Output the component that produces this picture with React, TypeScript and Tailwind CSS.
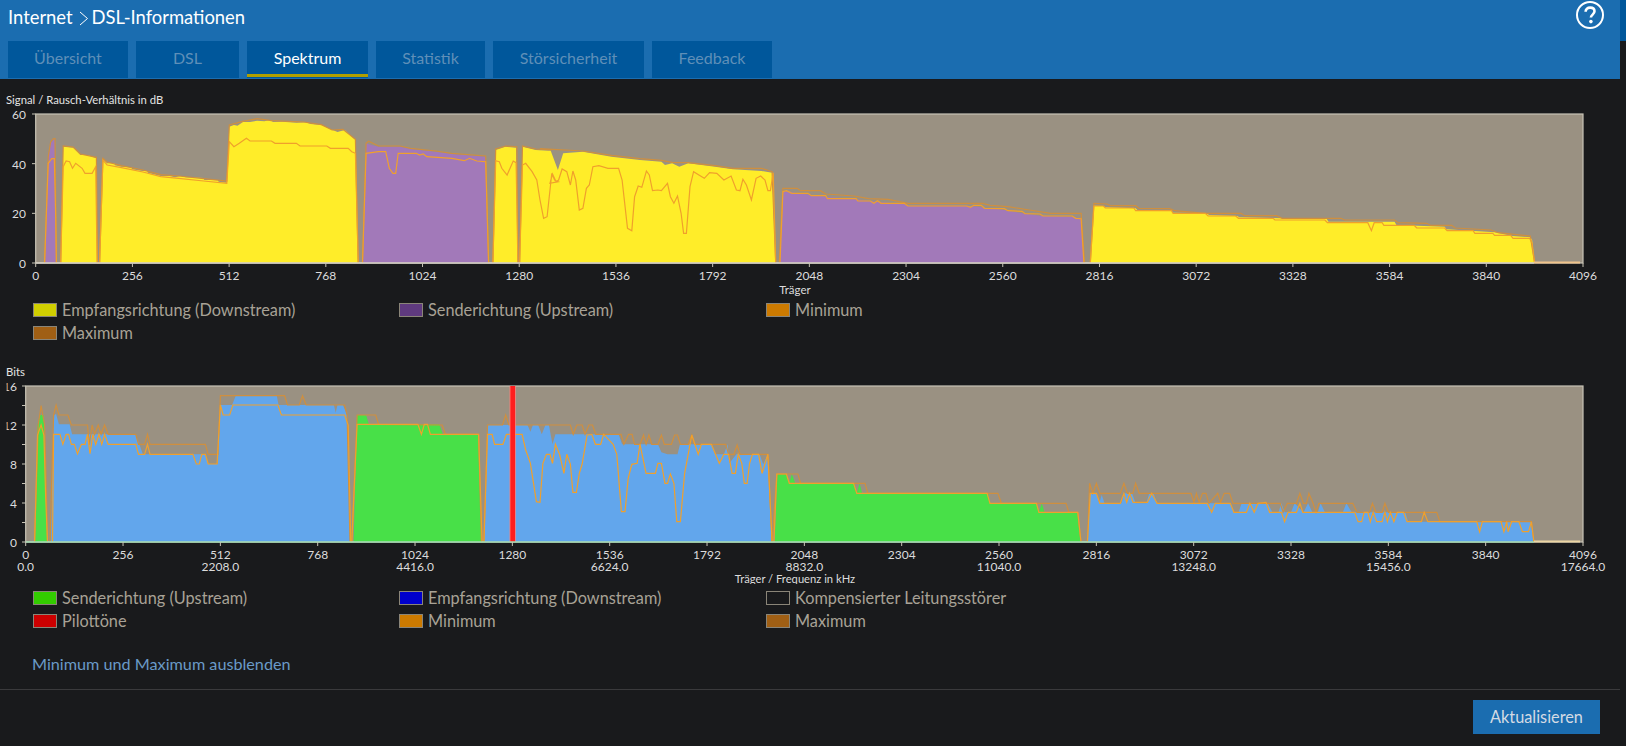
import React from 'react';

type Trace = [number, number, number[]][];

// Curves are read off the reference crops: page x = ox + x / 2.8, page y = oy + y / 3
const toPoints = (trace: Trace) =>
  trace
    .flatMap(([ox, oy, pts]) => {
      const out: string[] = [];
      for (let i = 0; i < pts.length; i += 2) {
        out.push(`${(ox + pts[i] / 2.8).toFixed(1)},${(oy + pts[i + 1] / 3).toFixed(1)}`);
      }
      return out;
    })
    .join(' ');

const YELLOW = '#ffed29';
const PURPLE = '#a279b9';
const BLUE = '#62a6ec';
const GREEN = '#48e048';

const snrAreas: { fill: string; trace: Trace }[] = [
  { fill: PURPLE, trace: [[0, 100, [125, 488, 135, 170, 142, 130, 150, 118, 154, 118, 155, 300, 158, 488]]] },
  {
    fill: YELLOW,
    trace: [[0, 100, [170, 488, 177, 140, 205, 143, 225, 165, 245, 165, 270, 175, 272, 488, 279, 488, 288, 178, 300, 190, 320, 190, 322, 196, 340, 200, 368, 202, 370, 208, 400, 213, 412, 213, 414, 218, 450, 228, 475, 228, 490, 232, 505, 228, 520, 232, 570, 234, 572, 240, 610, 240, 612, 245, 635, 248, 642, 80, 655, 75, 665, 77, 680, 66, 700, 66, 720, 62, 740, 64, 755, 60, 765, 66, 790, 65, 830, 68, 855, 67, 870, 72, 900, 75, 920, 85, 945, 96, 965, 90, 995, 120, 1003, 488]]],
  },
  { fill: PURPLE, trace: [[0, 100, [1015, 488, 1025, 130, 1040, 135, 1060, 140, 1120, 140, 1150, 147, 1220, 155, 1265, 162, 1360, 170, 1368, 488]]] },
  { fill: YELLOW, trace: [[0, 100, [1380, 488, 1388, 150, 1415, 140, 1445, 143, 1450, 488]]] },
  {
    fill: YELLOW,
    trace: [
      [0, 100, [1455, 488, 1463, 140, 1500, 150, 1545, 153]],
      [540, 100, [0, 150, 30, 152, 50, 210, 65, 160, 120, 155, 200, 170, 280, 180, 340, 185, 350, 195, 370, 190, 390, 200, 415, 190, 490, 200, 540, 208, 620, 213, 650, 218, 660, 488]],
    ],
  },
  { fill: PURPLE, trace: [[540, 100, [670, 488, 680, 275, 690, 272, 720, 280, 760, 285, 800, 290, 880, 297, 920, 303, 1020, 312, 1030, 317, 1200, 317, 1300, 330, 1350, 340, 1400, 347, 1490, 350, 1515, 355, 1523, 488]]] },
  { fill: YELLOW, trace: [[1066, 0, [68, 788, 78, 617, 105, 618, 110, 622, 195, 625, 200, 630, 295, 632, 300, 638, 395, 640, 400, 645, 480, 648, 485, 652, 600, 655, 730, 657, 735, 665, 920, 665, 925, 675, 1060, 680, 1065, 688, 1200, 697, 1250, 708, 1300, 712, 1305, 720, 1312, 788]]] },
];

const snrMax: Trace[] = [
  [[0, 100, [125, 488, 135, 170, 142, 125, 150, 116, 154, 116, 158, 488]]],
  [[0, 100, [170, 488, 177, 138, 205, 141, 225, 162, 270, 172, 273, 488, 279, 488, 288, 175, 300, 186, 340, 197, 400, 210, 450, 224, 500, 228, 570, 236, 635, 243, 642, 75, 680, 64, 720, 56, 760, 62, 850, 66, 900, 74, 930, 90, 960, 88, 995, 118, 1003, 488]]],
  [[0, 100, [1015, 488, 1025, 130, 1032, 124, 1060, 138, 1120, 138, 1150, 145, 1220, 153, 1265, 160, 1360, 168, 1368, 488]]],
  [[0, 100, [1380, 488, 1388, 147, 1415, 138, 1447, 140, 1450, 488]]],
  [
    [0, 100, [1455, 488, 1463, 138, 1500, 147, 1545, 150]],
    [540, 100, [0, 146, 120, 153, 200, 166, 280, 176, 340, 181, 370, 187, 415, 188, 490, 197, 540, 205, 620, 205, 650, 215, 660, 488]],
  ],
  [[540, 100, [670, 488, 680, 265, 720, 265, 730, 272, 785, 272, 800, 282, 880, 288, 920, 296, 975, 298, 1030, 310, 1240, 310, 1260, 316, 1310, 320, 1370, 330, 1430, 340, 1515, 340, 1525, 488]]],
  [[1066, 0, [68, 788, 78, 610, 115, 612, 125, 617, 195, 617, 205, 625, 290, 626, 305, 632, 390, 640, 490, 640, 500, 647, 590, 647, 605, 655, 770, 655, 780, 660, 920, 660, 930, 668, 1010, 670, 1020, 676, 1080, 676, 1090, 684, 1190, 690, 1210, 698, 1300, 708, 1312, 788]]],
];

const snrMin: Trace[] = [
  [[0, 100, [125, 488, 135, 190, 145, 176, 152, 176, 156, 350, 158, 488]]],
  [[0, 100, [170, 488, 177, 200, 185, 183, 195, 185, 203, 205, 212, 190, 230, 205, 238, 220, 258, 220, 268, 200, 272, 488, 279, 488, 288, 180, 300, 195, 340, 203, 400, 216, 450, 230, 500, 235, 570, 243, 635, 250, 642, 125, 655, 140, 670, 130, 690, 115, 700, 123, 760, 123, 770, 130, 830, 130, 840, 138, 915, 138, 925, 145, 975, 145, 985, 155, 995, 160, 1003, 488]]],
  [[0, 100, [1015, 488, 1025, 160, 1060, 155, 1080, 155, 1090, 205, 1100, 220, 1108, 220, 1115, 160, 1165, 160, 1175, 165, 1185, 162, 1195, 170, 1265, 175, 1300, 182, 1315, 175, 1335, 183, 1360, 185, 1368, 488]]],
  [[0, 100, [1380, 488, 1388, 182, 1398, 185, 1405, 205, 1420, 225, 1437, 183, 1445, 188, 1450, 488]]],
  [
    [0, 100, [1455, 488, 1463, 195, 1472, 190, 1490, 215, 1503, 240, 1512, 300, 1522, 355, 1532, 350, 1545, 220, 1553, 240, 1563, 245]],
    [540, 100, [28, 250, 35, 222, 45, 245, 52, 240, 62, 207, 75, 215, 85, 255, 92, 213, 100, 240, 110, 330, 120, 325, 130, 265, 138, 255, 148, 200, 165, 197, 190, 205, 220, 205, 230, 240, 245, 385, 257, 392, 265, 290, 275, 258, 285, 262, 298, 213, 306, 225, 315, 272, 330, 270, 340, 272, 357, 250, 365, 290, 375, 310, 385, 288, 395, 340, 402, 400, 410, 400, 420, 260, 430, 215, 445, 225, 460, 235, 475, 218, 495, 220, 515, 240, 535, 228, 550, 270, 560, 272, 568, 238, 578, 255, 592, 300, 605, 235, 618, 228, 630, 240, 638, 272, 645, 272, 653, 218, 660, 488]],
  ],
  [[540, 100, [672, 488, 680, 275, 690, 272, 705, 280, 750, 280, 760, 287, 800, 287, 805, 296, 885, 296, 890, 303, 925, 303, 935, 310, 945, 302, 955, 310, 1020, 310, 1030, 318, 1195, 318, 1205, 322, 1215, 316, 1235, 316, 1245, 325, 1300, 326, 1310, 332, 1350, 334, 1358, 341, 1400, 342, 1408, 348, 1490, 348, 1500, 355, 1515, 356, 1523, 488]]],
  [[1066, 0, [68, 788, 78, 618, 105, 618, 110, 624, 190, 624, 195, 632, 295, 632, 300, 640, 390, 640, 398, 648, 475, 648, 483, 655, 580, 655, 585, 660, 725, 660, 732, 668, 845, 668, 855, 692, 863, 668, 885, 668, 890, 676, 975, 676, 982, 684, 1060, 684, 1067, 692, 1140, 692, 1145, 700, 1195, 700, 1200, 706, 1245, 706, 1252, 715, 1298, 715, 1305, 730, 1312, 788]]],
];

const bitAreas: { fill: string; trace: Trace }[] = [
  { fill: GREEN, trace: [[0, 365, [97, 530, 105, 180, 113, 150, 122, 150, 128, 300, 133, 530]]] },
  {
    fill: BLUE,
    trace: [[0, 365, [137, 530, 143, 530, 148, 200, 152, 150, 157, 147, 165, 178, 195, 178, 202, 208, 380, 208, 390, 238, 400, 268, 575, 268, 583, 297, 610, 297, 617, 120, 650, 120, 660, 92, 775, 92, 780, 120, 935, 120, 940, 143, 945, 120, 960, 120, 972, 150, 975, 180, 982, 530]]],
  },
  { fill: GREEN, trace: [[0, 365, [990, 530, 1000, 150, 1025, 150, 1033, 178, 1230, 178, 1240, 208, 1340, 208, 1350, 530]]] },
  {
    fill: BLUE,
    trace: [
      [0, 365, [1355, 530, 1365, 180]],
      [490, 375, [0, 150, 105, 150, 113, 170, 120, 150, 135, 150, 145, 178, 155, 150, 165, 150, 175, 208, 183, 178, 360, 178, 370, 208, 470, 208, 480, 232, 497, 238, 525, 238, 532, 208, 620, 208, 630, 238, 655, 238, 665, 208, 670, 265, 690, 238, 755, 238, 765, 268, 778, 238, 788, 500]],
    ],
  },
  {
    fill: GREEN,
    trace: [
      [490, 375, [797, 500, 805, 297, 830, 297, 838, 325, 845, 297, 855, 325, 1020, 325, 1027, 355, 1035, 325, 1042, 355, 1395, 355, 1400, 385, 1530, 385, 1537, 412, 1545, 385, 1553, 412]],
      [1066, 375, [33, 412, 42, 500]],
    ],
  },
  {
    fill: BLUE,
    trace: [[1066, 375, [60, 500, 66, 355, 85, 355, 93, 385, 100, 360, 108, 385, 155, 385, 163, 355, 185, 355, 195, 385, 225, 385, 233, 355, 245, 355, 255, 385, 460, 385, 470, 412, 483, 412, 492, 385, 565, 385, 578, 412, 595, 412, 603, 385, 612, 412, 630, 412, 640, 385, 665, 412, 678, 385, 690, 412, 705, 412, 713, 385, 725, 412, 775, 412, 785, 385, 800, 412, 950, 412, 958, 440, 1303, 440, 1310, 500]]],
  },
];

const bitMax: Trace[] = [
  [[0, 365, [97, 530, 107, 180, 115, 122, 125, 180, 128, 300, 133, 530]]],
  [[0, 365, [140, 530, 150, 150, 157, 120, 165, 150, 190, 150, 200, 180, 245, 180, 250, 240, 258, 180, 265, 208, 275, 180, 283, 208, 293, 180, 303, 208, 380, 208, 388, 238, 405, 238, 413, 208, 420, 238, 575, 238, 583, 268, 610, 268, 617, 92, 797, 92, 805, 120, 838, 120, 847, 92, 857, 120, 965, 120, 972, 150, 980, 530]]],
  [[0, 365, [985, 530, 1000, 150, 1052, 150, 1060, 178, 1238, 180, 1247, 208, 1340, 208, 1348, 530]]],
  [
    [0, 365, [1355, 530, 1365, 180]],
    [490, 375, [0, 150, 35, 150, 44, 120, 53, 150, 225, 150, 233, 178, 243, 150, 258, 150, 266, 178, 277, 150, 287, 150, 296, 178, 367, 178, 375, 208, 388, 178, 398, 178, 405, 208, 420, 208, 430, 180, 437, 208, 445, 180, 453, 208, 470, 208, 480, 180, 488, 208, 508, 208, 517, 180, 525, 180, 533, 208, 555, 208, 565, 180, 573, 208, 660, 208, 668, 238, 683, 238, 692, 210, 700, 238, 778, 238, 790, 500]],
  ],
  [
    [490, 375, [790, 500, 803, 297, 862, 297, 870, 325, 1050, 325, 1058, 355, 1422, 355, 1432, 385, 1568, 385]],
    [1066, 375, [0, 385, 8, 412, 33, 412, 42, 500]],
  ],
  [[1066, 375, [60, 500, 66, 325, 75, 355, 85, 325, 95, 355, 152, 355, 162, 325, 172, 355, 187, 355, 195, 325, 205, 355, 350, 355, 358, 382, 365, 355, 373, 382, 382, 355, 392, 355, 400, 385, 425, 355, 433, 382, 443, 355, 458, 355, 468, 385, 600, 385, 608, 412, 620, 385, 645, 385, 655, 355, 665, 385, 673, 385, 680, 355, 692, 385, 700, 412, 708, 385, 803, 385, 815, 412, 850, 412, 858, 385, 868, 412, 885, 412, 893, 385, 903, 412, 1038, 412, 1047, 440, 1303, 440, 1310, 500]]],
];

const bitMin: Trace[] = [
  [[0, 365, [97, 530, 105, 210, 115, 180, 123, 210, 128, 400, 133, 530]]],
  [[0, 365, [147, 530, 150, 208, 168, 208, 176, 238, 185, 208, 192, 208, 200, 238, 208, 238, 217, 266, 228, 238, 238, 238, 245, 208, 252, 266, 260, 208, 268, 238, 277, 208, 285, 238, 293, 208, 303, 238, 380, 238, 388, 268, 405, 268, 413, 238, 420, 268, 540, 268, 550, 297, 558, 297, 565, 268, 575, 268, 583, 297, 608, 297, 617, 120, 625, 150, 643, 150, 652, 120, 778, 120, 788, 150, 965, 150, 975, 180, 982, 530]]],
  [[0, 365, [985, 530, 1000, 178, 1170, 178, 1180, 208, 1188, 178, 1197, 178, 1205, 208, 1340, 208, 1350, 530]]],
  [
    [0, 365, [1355, 530, 1365, 208, 1378, 208, 1385, 238, 1408, 238, 1418, 208]],
    [490, 375, [90, 178, 100, 225, 113, 265, 130, 380, 140, 382, 148, 265, 158, 238, 168, 238, 175, 265, 183, 208, 195, 238, 207, 295, 215, 238, 225, 268, 232, 352, 242, 352, 250, 295, 258, 268, 272, 180, 285, 178, 295, 208, 310, 208, 318, 178, 345, 208, 355, 238, 368, 410, 378, 410, 387, 310, 397, 268, 412, 265, 420, 208, 437, 295, 463, 295, 470, 265, 480, 265, 490, 325, 497, 325, 505, 297, 515, 325, 523, 440, 533, 440, 545, 295, 555, 238, 565, 180, 583, 238, 592, 208, 620, 208, 642, 265, 655, 238, 668, 238, 678, 295, 687, 295, 695, 238, 705, 265, 712, 325, 720, 325, 727, 265, 735, 238, 752, 238, 762, 295, 778, 238, 790, 500]],
  ],
  [
    [490, 375, [795, 500, 803, 297, 830, 297, 838, 325, 1018, 325, 1027, 355, 1392, 355, 1400, 385, 1530, 385, 1537, 412]],
    [1066, 375, [33, 412, 42, 500]],
  ],
  [[1066, 375, [60, 500, 68, 355, 85, 355, 95, 385, 152, 385, 162, 355, 170, 382, 178, 355, 188, 382, 228, 382, 240, 355, 255, 385, 395, 385, 408, 412, 418, 385, 460, 385, 470, 412, 505, 412, 515, 385, 527, 412, 538, 385, 560, 382, 570, 412, 603, 412, 612, 440, 622, 412, 645, 412, 655, 385, 663, 412, 808, 412, 818, 440, 828, 440, 835, 412, 845, 412, 852, 440, 860, 412, 870, 440, 885, 440, 893, 412, 900, 440, 908, 412, 918, 440, 928, 412, 945, 412, 955, 440, 995, 440, 1003, 412, 1013, 440, 1150, 440, 1158, 470, 1166, 440, 1218, 440, 1226, 470, 1234, 440, 1238, 470, 1248, 440, 1268, 440, 1278, 470, 1295, 470, 1303, 440, 1310, 500]]],
];

const carriers = [0, 256, 512, 768, 1024, 1280, 1536, 1792, 2048, 2304, 2560, 2816, 3072, 3328, 3584, 3840, 4096];

const Curves = ({ areas, max, min }: { areas: { fill: string; trace: Trace }[]; max: Trace[]; min: Trace[] }) => (
  <>
    {areas.map((a, i) => (
      <polygon key={i} points={toPoints(a.trace)} fill={a.fill} />
    ))}
    {max.map((t, i) => (
      <polyline key={i} points={toPoints(t)} fill="none" stroke="#cf8f3f" strokeWidth={1.2} />
    ))}
    {min.map((t, i) => (
      <polyline key={i} points={toPoints(t)} fill="none" stroke="#f0a02c" strokeWidth={1.2} />
    ))}
  </>
);

const SnrChart = () => {
  const left = 35.7;
  const right = 1583;
  const top = 114;
  const bottom = 263;
  const xOf = (c: number) => left + (c * (right - left)) / 4096;
  return (
    <svg viewBox="0 108 1620 188" className="block w-[1620px] h-[188px]">
      <rect x={left} y={top} width={right - left} height={bottom - top} fill="#9a9182" stroke="#c8c4b6" strokeWidth={1.2} />
      <Curves areas={snrAreas} max={snrMax} min={snrMin} />
      <line x1={1534} y1={bottom - 0.5} x2={1580} y2={bottom - 0.5} stroke="#f0c48c" strokeWidth={2} />
      <line x1={left} y1={bottom} x2={1534} y2={bottom} stroke="#d6d0c6" strokeWidth={1.5} />
      {[60, 40, 20, 0].map((v) => {
        const y = bottom - ((bottom - top) * v) / 60;
        return (
          <g key={v}>
            <line x1={32} y1={y} x2={left} y2={y} stroke="#c8c4b6" />
            <text x={26} y={y + 0.5} textAnchor="end" dominantBaseline="central" fontSize={12} fill="#dcdcdc">
              {v}
            </text>
          </g>
        );
      })}
      {carriers.map((c) => (
        <g key={c}>
          <line x1={xOf(c)} y1={bottom} x2={xOf(c)} y2={bottom + 4} stroke="#c8c4b6" />
          <text x={xOf(c)} y={275} textAnchor="middle" dominantBaseline="central" fontSize={12} fill="#dcdcdc">
            {c}
          </text>
        </g>
      ))}
      <text x={795} y={289} textAnchor="middle" dominantBaseline="central" fontSize={11.5} fill="#dcdcdc">
        Träger
      </text>
    </svg>
  );
};

const BitsChart = () => {
  const left = 25.7;
  const right = 1583;
  const top = 386;
  const bottom = 542;
  const xOf = (c: number) => left + (c * (right - left)) / 4096;
  const ticks = [16, 14, 12, 10, 8, 6, 4, 2, 0];
  return (
    <svg viewBox="0 380 1620 204" className="block w-[1620px] h-[204px]">
      <defs>
        <clipPath id="bits-labels">
          <rect x={6.6} y={380} width={20} height={170} />
        </clipPath>
      </defs>
      <rect x={left} y={top} width={right - left} height={bottom - top} fill="#9a9182" stroke="#c8c4b6" strokeWidth={1.2} />
      <Curves areas={bitAreas} max={bitMax} min={bitMin} />
      <rect x={509.6} y={top} width={6.1} height={bottom - top} fill="#ff8078" />
      <rect x={510.4} y={top} width={4.6} height={bottom - top} fill="#ff1e1e" />
      <line x1={1534} y1={bottom - 0.5} x2={1580} y2={bottom - 0.5} stroke="#ecd6a4" strokeWidth={2} />
      <line x1={left} y1={bottom} x2={1534} y2={bottom} stroke="#a4dcb4" strokeWidth={1.5} />
      {ticks.map((v) => {
        const y = bottom - ((bottom - top) * v) / 16;
        return (
          <g key={v}>
            <line x1={22} y1={y} x2={left} y2={y} stroke="#c8c4b6" />
            {v % 4 === 0 && (
              <g clipPath="url(#bits-labels)">
                <text x={17} y={y + 0.5} textAnchor="end" dominantBaseline="central" fontSize={12} fill="#dcdcdc">
                  {v}
                </text>
              </g>
            )}
          </g>
        );
      })}
      {carriers.map((c, i) => (
        <g key={c}>
          <line x1={xOf(c)} y1={bottom} x2={xOf(c)} y2={bottom + 4} stroke="#c8c4b6" />
          <text x={xOf(c)} y={554} textAnchor="middle" dominantBaseline="central" fontSize={12} fill="#dcdcdc">
            {c}
          </text>
          {i % 2 === 0 && (
            <text x={xOf(c)} y={566.5} textAnchor="middle" dominantBaseline="central" fontSize={12} fill="#dcdcdc">
              {(c * 4.3125).toFixed(1)}
            </text>
          )}
        </g>
      ))}
      <text x={795} y={578} textAnchor="middle" dominantBaseline="central" fontSize={11.2} fill="#dcdcdc">
        Träger / Frequenz in kHz
      </text>
    </svg>
  );
};

const Swatch = ({ className }: { className: string }) => (
  <span className={`w-6 h-[14px] shrink-0 border border-[#8a8578] ${className}`} />
);

const LegendItem = ({ color, label }: { color: string; label: string }) => (
  <div className="flex items-center gap-[5px] h-[23px] text-[16.3px] text-[#a8a296]">
    <Swatch className={color} />
    <span className="whitespace-nowrap pt-[2px]">{label}</span>
  </div>
);

const tabs = [
  { label: 'Übersicht', width: 'w-[120px]' },
  { label: 'DSL', width: 'w-[103px]' },
  { label: 'Spektrum', width: 'w-[121px]', active: true },
  { label: 'Statistik', width: 'w-[109px]' },
  { label: 'Störsicherheit', width: 'w-[151px]' },
  { label: 'Feedback', width: 'w-[120px]' },
];

export default function App() {
  return (
    <div className="flex w-[1626px] h-[746px] overflow-hidden bg-[#191a1c] font-['Lato','Noto_Sans',sans-serif]">
      <div className="w-[1620px] shrink-0 flex flex-col">
        {/* Header */}
        <header className="h-[79px] bg-[#1b6db0] flex flex-col">
          <div className="h-[41px] flex items-start justify-between pl-2 pr-4">
            <div className="flex items-center h-[36px] text-[18.4px] text-white">
              <span>Internet</span>
              <svg className="w-[10px] h-[15px] ml-[6px] mr-[3px]" viewBox="0 0 10 15" fill="none" stroke="currentColor" strokeWidth={1}>
                <path d="M1 1l7.5 6.5L1 14" />
              </svg>
              <span>DSL-Informationen</span>
            </div>
            <svg className="mt-[1px] w-[28px] h-[28px] text-white" viewBox="0 0 28 28" fill="none">
              <circle cx="14" cy="14" r="13" stroke="currentColor" strokeWidth={2} />
              <path d="M9.6 10.8c0-2.7 2-4.2 4.5-4.2 2.6 0 4.4 1.5 4.4 3.7 0 3.2-3.6 3.4-3.6 6.3" stroke="currentColor" strokeWidth={2.6} />
              <circle cx="14.9" cy="20.6" r="1.8" fill="currentColor" />
            </svg>
          </div>
          <nav className="flex gap-2 pl-2 h-[37px]">
            {tabs.map((tab) => (
              <div
                key={tab.label}
                className={`relative h-[37px] pb-1 ${tab.width} bg-[#00579b] flex items-center justify-center text-[16px] ${
                  tab.active ? 'text-white' : 'text-[#5f8fb8]'
                }`}
              >
                {tab.label}
                {tab.active && <span className="absolute left-0 right-0 bottom-[1px] h-[3px] bg-[#b09f00]" />}
              </div>
            ))}
          </nav>
        </header>

        {/* Signal / noise */}
        <div className="h-[16px] mt-[13px] pl-[6px] text-[11.3px] leading-[16px] text-[#e4e4e4]">Signal / Rausch-Verhältnis in dB</div>
        <SnrChart />
        <div className="grid grid-cols-[366px_367px_1fr] pl-[33px] mt-[2px]">
          <LegendItem color="bg-[#d1cf00]" label="Empfangsrichtung (Downstream)" />
          <LegendItem color="bg-[#5f3a7f]" label="Senderichtung (Upstream)" />
          <LegendItem color="bg-[#cc7a00]" label="Minimum" />
          <LegendItem color="bg-[#a05f14]" label="Maximum" />
        </div>

        {/* Bits */}
        <div className="h-[16px] mt-[20px] pl-[6px] text-[11.3px] leading-[16px] text-[#e4e4e4]">Bits</div>
        <BitsChart />
        <div className="grid grid-cols-[366px_367px_1fr] pl-[33px] mt-[2px]">
          <LegendItem color="bg-[#33cc00]" label="Senderichtung (Upstream)" />
          <LegendItem color="bg-[#0000cc]" label="Empfangsrichtung (Downstream)" />
          <LegendItem color="bg-transparent" label="Kompensierter Leitungsstörer" />
          <LegendItem color="bg-[#cc0000]" label="Pilottöne" />
          <LegendItem color="bg-[#cc7a00]" label="Minimum" />
          <LegendItem color="bg-[#a05f14]" label="Maximum" />
        </div>

        <a className="block h-[24px] mt-[20px] pl-[32px] text-[16.2px] leading-[24px] text-[#6a9ac8]">Minimum und Maximum ausblenden</a>

        <hr className="mt-[13px] border-0 border-t border-[#3a3a3c]" />

        <div className="flex justify-end pr-5 mt-[10px]">
          <button className="w-[127px] h-[34px] bg-[#1b6db0] text-[16.3px] text-[#d4dbe4]">Aktualisieren</button>
        </div>
      </div>
      <div className="flex-1">
        <div className="h-[41px] bg-[#00579b]" />
      </div>
    </div>
  );
}
